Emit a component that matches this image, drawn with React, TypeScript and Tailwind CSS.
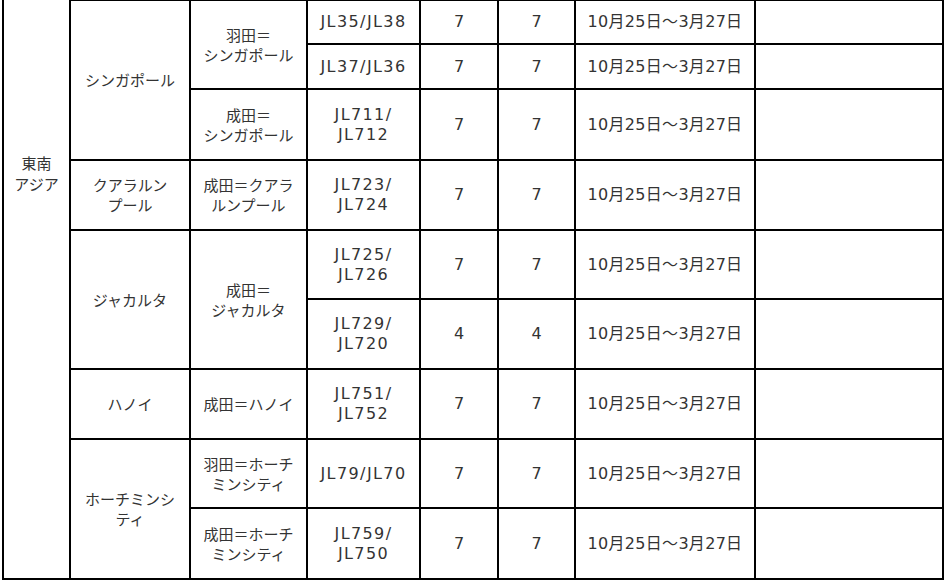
import React from "react";

const cell = "border-2 border-black px-2 text-center align-middle";
const jp = "border-2 border-black px-2 text-center align-middle text-[15px] leading-[20px]";
const latin = "border-2 border-black px-1 text-center align-middle text-[16px] leading-[20px] font-['DejaVu_Sans','Noto_Sans_CJK_JP',sans-serif]";
const flight = latin + " tracking-[1.4px]";

function Date() {
  return <td className={latin + " tracking-[0.3px]"}>10月25日～3月27日</td>;
}

function Empty() {
  return <td className={cell}></td>;
}

function Days({ n }: { n: number }) {
  return (
    <>
      <td className={latin}>{n}</td>
      <td className={latin}>{n}</td>
    </>
  );
}

export default function App() {
  return (
    <div className="w-[946px] h-[580px] overflow-hidden bg-white text-[#333] font-['Noto_Sans_CJK_JP',sans-serif]">
      <table className="ml-[2px] -mt-px border-collapse table-fixed w-[940px]">
        <colgroup>
          <col className="w-[67px]" />
          <col className="w-[120px]" />
          <col className="w-[117px]" />
          <col className="w-[113px]" />
          <col className="w-[78px]" />
          <col className="w-[77px]" />
          <col className="w-[180px]" />
          <col className="w-[188px]" />
        </colgroup>
        <tbody>
          <tr className="h-[44px]">
            <td rowSpan={9} className="border-2 border-t-0 border-black px-1 text-center align-top pt-[152px] text-[15px] leading-[21px]">
              東南
              <br />
              アジア
            </td>
            <td rowSpan={3} className={jp}>シンガポール</td>
            <td rowSpan={2} className={jp}>
              羽田＝
              <br />
              シンガポール
            </td>
            <td className={flight}>JL35/JL38</td>
            <Days n={7} />
            <Date />
            <Empty />
          </tr>
          <tr className="h-[45px]">
            <td className={flight}>JL37/JL36</td>
            <Days n={7} />
            <Date />
            <Empty />
          </tr>
          <tr className="h-[71px]">
            <td className={jp}>
              成田＝
              <br />
              シンガポール
            </td>
            <td className={flight}>
              JL711/
              <br />
              JL712
            </td>
            <Days n={7} />
            <Date />
            <Empty />
          </tr>
          <tr className="h-[70px]">
            <td className={jp}>
              クアラルン
              <br />
              プール
            </td>
            <td className={jp}>
              成田＝クアラ
              <br />
              ルンプール
            </td>
            <td className={flight}>
              JL723/
              <br />
              JL724
            </td>
            <Days n={7} />
            <Date />
            <Empty />
          </tr>
          <tr className="h-[69px]">
            <td rowSpan={2} className={jp}>ジャカルタ</td>
            <td rowSpan={2} className={jp}>
              成田＝
              <br />
              ジャカルタ
            </td>
            <td className={flight}>
              JL725/
              <br />
              JL726
            </td>
            <Days n={7} />
            <Date />
            <Empty />
          </tr>
          <tr className="h-[70px]">
            <td className={flight}>
              JL729/
              <br />
              JL720
            </td>
            <Days n={4} />
            <Date />
            <Empty />
          </tr>
          <tr className="h-[70px]">
            <td className={jp}>ハノイ</td>
            <td className={jp}>成田＝ハノイ</td>
            <td className={flight}>
              JL751/
              <br />
              JL752
            </td>
            <Days n={7} />
            <Date />
            <Empty />
          </tr>
          <tr className="h-[69px]">
            <td rowSpan={2} className={jp}>
              ホーチミンシ
              <br />
              ティ
            </td>
            <td className={jp}>
              羽田＝ホーチ
              <br />
              ミンシティ
            </td>
            <td className={flight}>JL79/JL70</td>
            <Days n={7} />
            <Date />
            <Empty />
          </tr>
          <tr className="h-[71px]">
            <td className={jp}>
              成田＝ホーチ
              <br />
              ミンシティ
            </td>
            <td className={flight}>
              JL759/
              <br />
              JL750
            </td>
            <Days n={7} />
            <Date />
            <Empty />
          </tr>
        </tbody>
      </table>
    </div>
  );
}
